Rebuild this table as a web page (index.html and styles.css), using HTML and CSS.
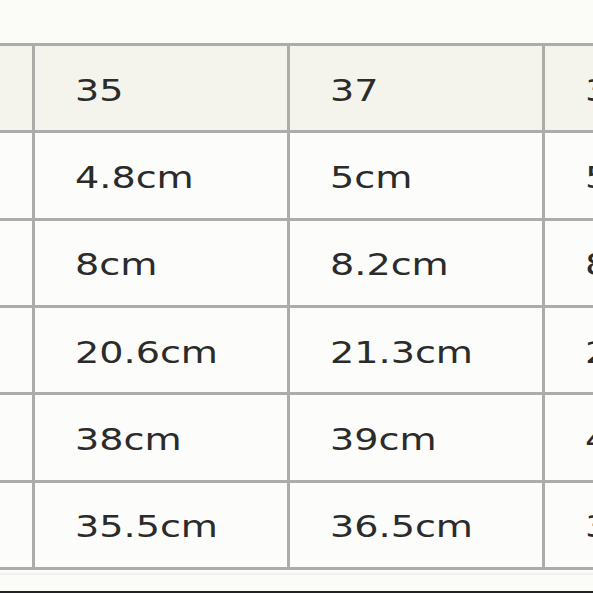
FILE: index.html
```html
<!DOCTYPE html>
<html>
<head>
<meta charset="utf-8">
<link rel="stylesheet" href="styles.css">
</head>
<body>
<div class="page">
  <table class="size-table">
    <tr class="head">
      <td></td><td><span class="t">35</span></td><td><span class="t">37</span></td><td><span class="t">39</span></td>
    </tr>
    <tr>
      <td></td><td><span class="t">4.8cm</span></td><td><span class="t">5cm</span></td><td><span class="t">5.2cm</span></td>
    </tr>
    <tr>
      <td></td><td><span class="t">8cm</span></td><td><span class="t">8.2cm</span></td><td><span class="t">8.4cm</span></td>
    </tr>
    <tr>
      <td></td><td><span class="t">20.6cm</span></td><td><span class="t">21.3cm</span></td><td><span class="t">22cm</span></td>
    </tr>
    <tr>
      <td></td><td><span class="t">38cm</span></td><td><span class="t">39cm</span></td><td><span class="t">40cm</span></td>
    </tr>
    <tr>
      <td></td><td><span class="t">35.5cm</span></td><td><span class="t">36.5cm</span></td><td><span class="t">37.5cm</span></td>
    </tr>
  </table>
  <div class="below"></div>
  <div class="bar"></div>
</div>
</body>
</html>
```
FILE: styles.css
```css
html, body {
  margin: 0;
  padding: 0;
  background: #fbfbf8;
  overflow: hidden;
}
.page {
  width: 593px;
  height: 593px;
  overflow: hidden;
  padding-top: 43px;
  box-sizing: border-box;
  display: flex;
  flex-direction: column;
}
.size-table {
  border-collapse: collapse;
  margin-left: -223px;
  table-layout: fixed;
  flex: none;
}
.size-table td {
  width: 255px;
  min-width: 255px;
  height: 87.33px;
  padding: 3px 0 0 40px;
  box-sizing: border-box;
  border: 3px solid #acacaa;
  background: #fcfcfa;
  vertical-align: middle;
  white-space: nowrap;
  font-family: "DejaVu Sans", sans-serif;
  font-size: 31px;
  color: #2b2b2b;
}
.size-table tr.head td {
  background: #f4f3ec;
}
.t {
  display: inline-block;
  transform: scaleX(1.23);
  transform-origin: left center;
}
.below {
  flex: 1;
  border-top: 2px solid #f1f1ee;
  margin-top: 3px;
}
.bar {
  height: 2px;
  background: #222;
  flex: none;
}
```
